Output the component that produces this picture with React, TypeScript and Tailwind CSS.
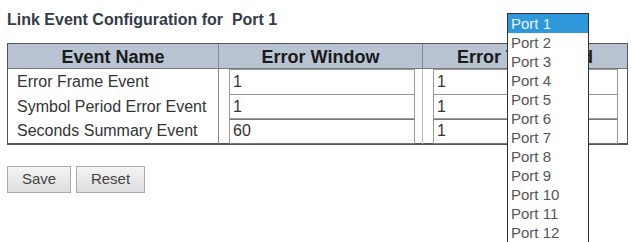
import React from 'react'

const rows = [
  { name: 'Error Frame Event', window: '1', threshold: '1' },
  { name: 'Symbol Period Error Event', window: '1', threshold: '1' },
  { name: 'Seconds Summary Event', window: '60', threshold: '1' },
]

const ports = Array.from({ length: 12 }, (_, i) => `Port ${i + 1}`)

export default function App() {
  return (
    <div
      className="relative w-[631px] h-[242px] overflow-hidden bg-white"
      style={{ fontFamily: '"Liberation Sans", Arial, sans-serif' }}
    >
      <div className="pl-[7px] pt-[10px]">
        <h1 className="text-[16px] leading-[20px] font-bold text-[#333b46] whitespace-pre">
          Link Event Configuration for  Port 1
        </h1>

        {/* Config table */}
        <div className="mt-[13px] w-[621px] border border-[#555] border-b-2">
          <div className="grid grid-cols-[211px_204px_1fr] h-[25px] bg-[#b8c4d2] border-b border-[#777] text-[18px] font-bold text-[#1a1a1a]">
            <div className="flex items-center justify-center border-r border-[#888]">Event Name</div>
            <div className="flex items-center justify-center border-r border-[#888]">Error Window</div>
            <div className="flex items-center justify-center">Error Threshold</div>
          </div>
          {rows.map((r) => (
            <div key={r.name} className="grid grid-cols-[211px_204px_1fr] h-[24.5px] text-[16px] text-[#333]">
              <div className="flex items-center pl-[9px] border-r border-[#888] whitespace-nowrap">{r.name}</div>
              <div className="flex items-center pl-[10px] pr-[7px] border-r border-[#bbb]">
                <div className="w-full h-full border border-[#999] border-b-[#777] flex items-center pl-[3px]">
                  {r.window}
                </div>
              </div>
              <div className="flex items-center pl-[10px] pr-[9px]">
                <div className="w-full h-full border border-[#999] border-b-[#777] flex items-center pl-[3px]">
                  {r.threshold}
                </div>
              </div>
            </div>
          ))}
        </div>

        <div className="mt-[21px] flex gap-[5px] text-[15px] text-[#444]">
          <button className="w-[64px] h-[27px] border border-[#aaa] bg-gradient-to-b from-[#f4f4f4] to-[#dedede]">
            Save
          </button>
          <button className="w-[69px] h-[27px] border border-[#aaa] bg-gradient-to-b from-[#f4f4f4] to-[#dedede]">
            Reset
          </button>
        </div>
      </div>

      {/* Open port dropdown */}
      <div className="absolute left-[507px] top-[13px] w-[82px] border border-[#333] bg-white">
        {ports.map((p, i) => (
          <div
            key={p}
            className={
              i === 0
                ? 'h-[19px] pl-[3px] text-[15px] leading-[19px] bg-[#2f98db] text-[#eaf6ff]'
                : 'h-[19px] pl-[3px] text-[15px] leading-[19px] text-[#555]'
            }
          >
            {p}
          </div>
        ))}
      </div>
    </div>
  )
}
